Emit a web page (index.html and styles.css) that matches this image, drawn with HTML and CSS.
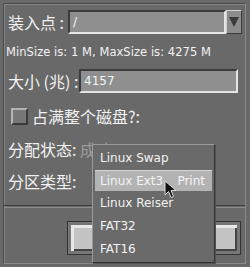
FILE: index.html
```html
<!DOCTYPE html>
<html lang="zh">
<head>
  <meta charset="UTF-8">
  <title>分区</title>
  <link rel="stylesheet" href="styles.css">
</head>
<body>

  <div class="frame">
    <div class="row mount">
      <span class="label">装入点 :</span>
      <div class="combo">
        <div class="field">/</div>
        <div class="arrow"><span class="tri"></span></div>
      </div>
    </div>

    <div class="info">MinSize is: 1 M, MaxSize is: 4275 M</div>

    <div class="row size">
      <span class="label">大小 (兆) :</span>
      <div class="field wide">4157</div>
    </div>

    <div class="row check">
      <span class="box"></span>
      <span class="label">占满整个磁盘?:</span>
    </div>

    <div class="row status">
      <span class="label">分配状态:</span>
      <span class="muted">成功</span>
    </div>

    <div class="row type">
      <span class="label">分区类型:</span>
    </div>

    <div class="sep"></div>

    <div class="actions">
      <button class="btn"></button>
    </div>
  </div>

  <ul class="menu">
    <li>Linux Swap</li>
    <li class="active"><span>Linux Ext3</span><span>Print</span></li>
    <li>Linux Reiser</li>
    <li>FAT32</li>
    <li>FAT16</li>
  </ul>

  <svg class="cursor" width="13" height="19" viewBox="0 0 13 19">
    <path d="M1 1 L1 15 L4.5 11.5 L7 17.5 L9.5 16.5 L7 10.5 L12 10.5 Z" fill="#111" stroke="#ddd" stroke-width="1"/>
  </svg>

</body>
</html>
```

FILE: styles.css
```css
body {
  margin: 0;
  width: 250px;
  height: 267px;
  background: #696969;
  color: #f2f2f2;
  font-family: "Noto Sans CJK SC", "DejaVu Sans", sans-serif;
  overflow: hidden;
  position: relative;
}

.frame {
  position: relative;
  margin: 3px 0 0 3px;
  width: 241px;
  height: 259px;
  border-left: 1px solid #4a4a4a;
  border-top: 1px solid #4a4a4a;
  border-right: 1px solid #8a8a8a;
  border-bottom: 1px solid #8a8a8a;
  box-shadow: inset 1px 1px 0 #858585;
}

.row {
  display: flex;
  align-items: center;
}

.label {
  font-size: 16px;
  line-height: 20px;
  white-space: nowrap;
}

.mount {
  margin-top: 6px;
  height: 24px;
  padding-left: 4px;
}

.mount .label {
  width: 60px;
}

.combo {
  display: flex;
  height: 24px;
}

.field {
  box-sizing: border-box;
  height: 24px;
  background: #8f8f8f;
  border-top: 2px solid #3c3c3c;
  border-left: 2px solid #3c3c3c;
  border-bottom: 2px solid #e4e4e4;
  border-right: 2px solid #e4e4e4;
  font-family: "DejaVu Sans", sans-serif;
  font-size: 12px;
  line-height: 20px;
  padding-left: 3px;
  color: #f4f4f4;
}

.combo .field {
  width: 158px;
}

.arrow {
  box-sizing: border-box;
  width: 16px;
  height: 24px;
  background: #8c8c8c;
  border-top: 1px solid #d0d0d0;
  border-left: 1px solid #d0d0d0;
  border-bottom: 1px solid #3a3a3a;
  border-right: 1px solid #3a3a3a;
  display: flex;
  justify-content: center;
  padding-top: 6px;
}

.tri {
  width: 0;
  height: 0;
  border-left: 5px solid transparent;
  border-right: 5px solid transparent;
  border-top: 10px solid #3a3a3a;
}

.info {
  margin-top: 11px;
  padding-left: 2px;
  font-family: "DejaVu Sans", sans-serif;
  font-size: 11.5px;
  line-height: 14px;
  letter-spacing: 0.05px;
}

.size {
  margin-top: 10px;
  height: 24px;
  padding-left: 4px;
}

.size .label {
  width: 71px;
}

.field.wide {
  width: 159px;
}

.check {
  margin-top: 14px;
  height: 18px;
  padding-left: 7px;
}

.box {
  box-sizing: border-box;
  width: 17px;
  height: 17px;
  margin-right: 4px;
  background: #777;
  border-top: 2px solid #b4b4b4;
  border-left: 2px solid #b4b4b4;
  border-bottom: 2px solid #3a3a3a;
  border-right: 2px solid #3a3a3a;
}

.status {
  margin-top: 14px;
  height: 20px;
  padding-left: 4px;
}

.status .label {
  width: 72px;
}

.muted {
  color: #9c9c9c;
  font-size: 16px;
  line-height: 20px;
}

.type {
  margin-top: 12px;
  height: 20px;
  padding-left: 4px;
}

.sep {
  margin-top: 14px;
  height: 1px;
  border-top: 1px solid #3e3e3e;
  border-bottom: 1px solid #8e8e8e;
}

.actions {
  margin-top: 13px;
  padding-left: 63px;
}

.btn {
  display: block;
  box-sizing: border-box;
  width: 174px;
  height: 34px;
  padding: 0;
  background: #c4c4c4;
  border: 1px solid #333;
  box-shadow: inset 0 0 0 3px #777, inset 2px 2px 0 4px #e8e8e8, inset -1px -1px 0 4px #444;
}

.menu {
  position: absolute;
  left: 92px;
  top: 144px;
  width: 123px;
  height: 119px;
  box-sizing: border-box;
  margin: 0;
  padding: 2px 2px 0 2px;
  list-style: none;
  background: #6a6a6a;
  border-top: 1px solid #9a9a9a;
  border-left: 1px solid #9a9a9a;
  border-right: 1px solid #333;
  border-bottom: 1px solid #333;
  box-shadow: 1px 1px 0 #555;
  font-family: "DejaVu Sans", sans-serif;
  font-size: 12px;
}

.menu li {
  height: 22px;
  line-height: 22px;
  padding: 0 7px 0 5px;
  margin-bottom: 1px;
  display: flex;
  justify-content: space-between;
}

.menu li.active {
  background: #b3b3b3;
  color: #f4f4f4;
  border-top: 1px solid #d4d4d4;
  height: 20px;
  line-height: 20px;
}

.cursor {
  position: absolute;
  left: 164px;
  top: 180px;
}
```
